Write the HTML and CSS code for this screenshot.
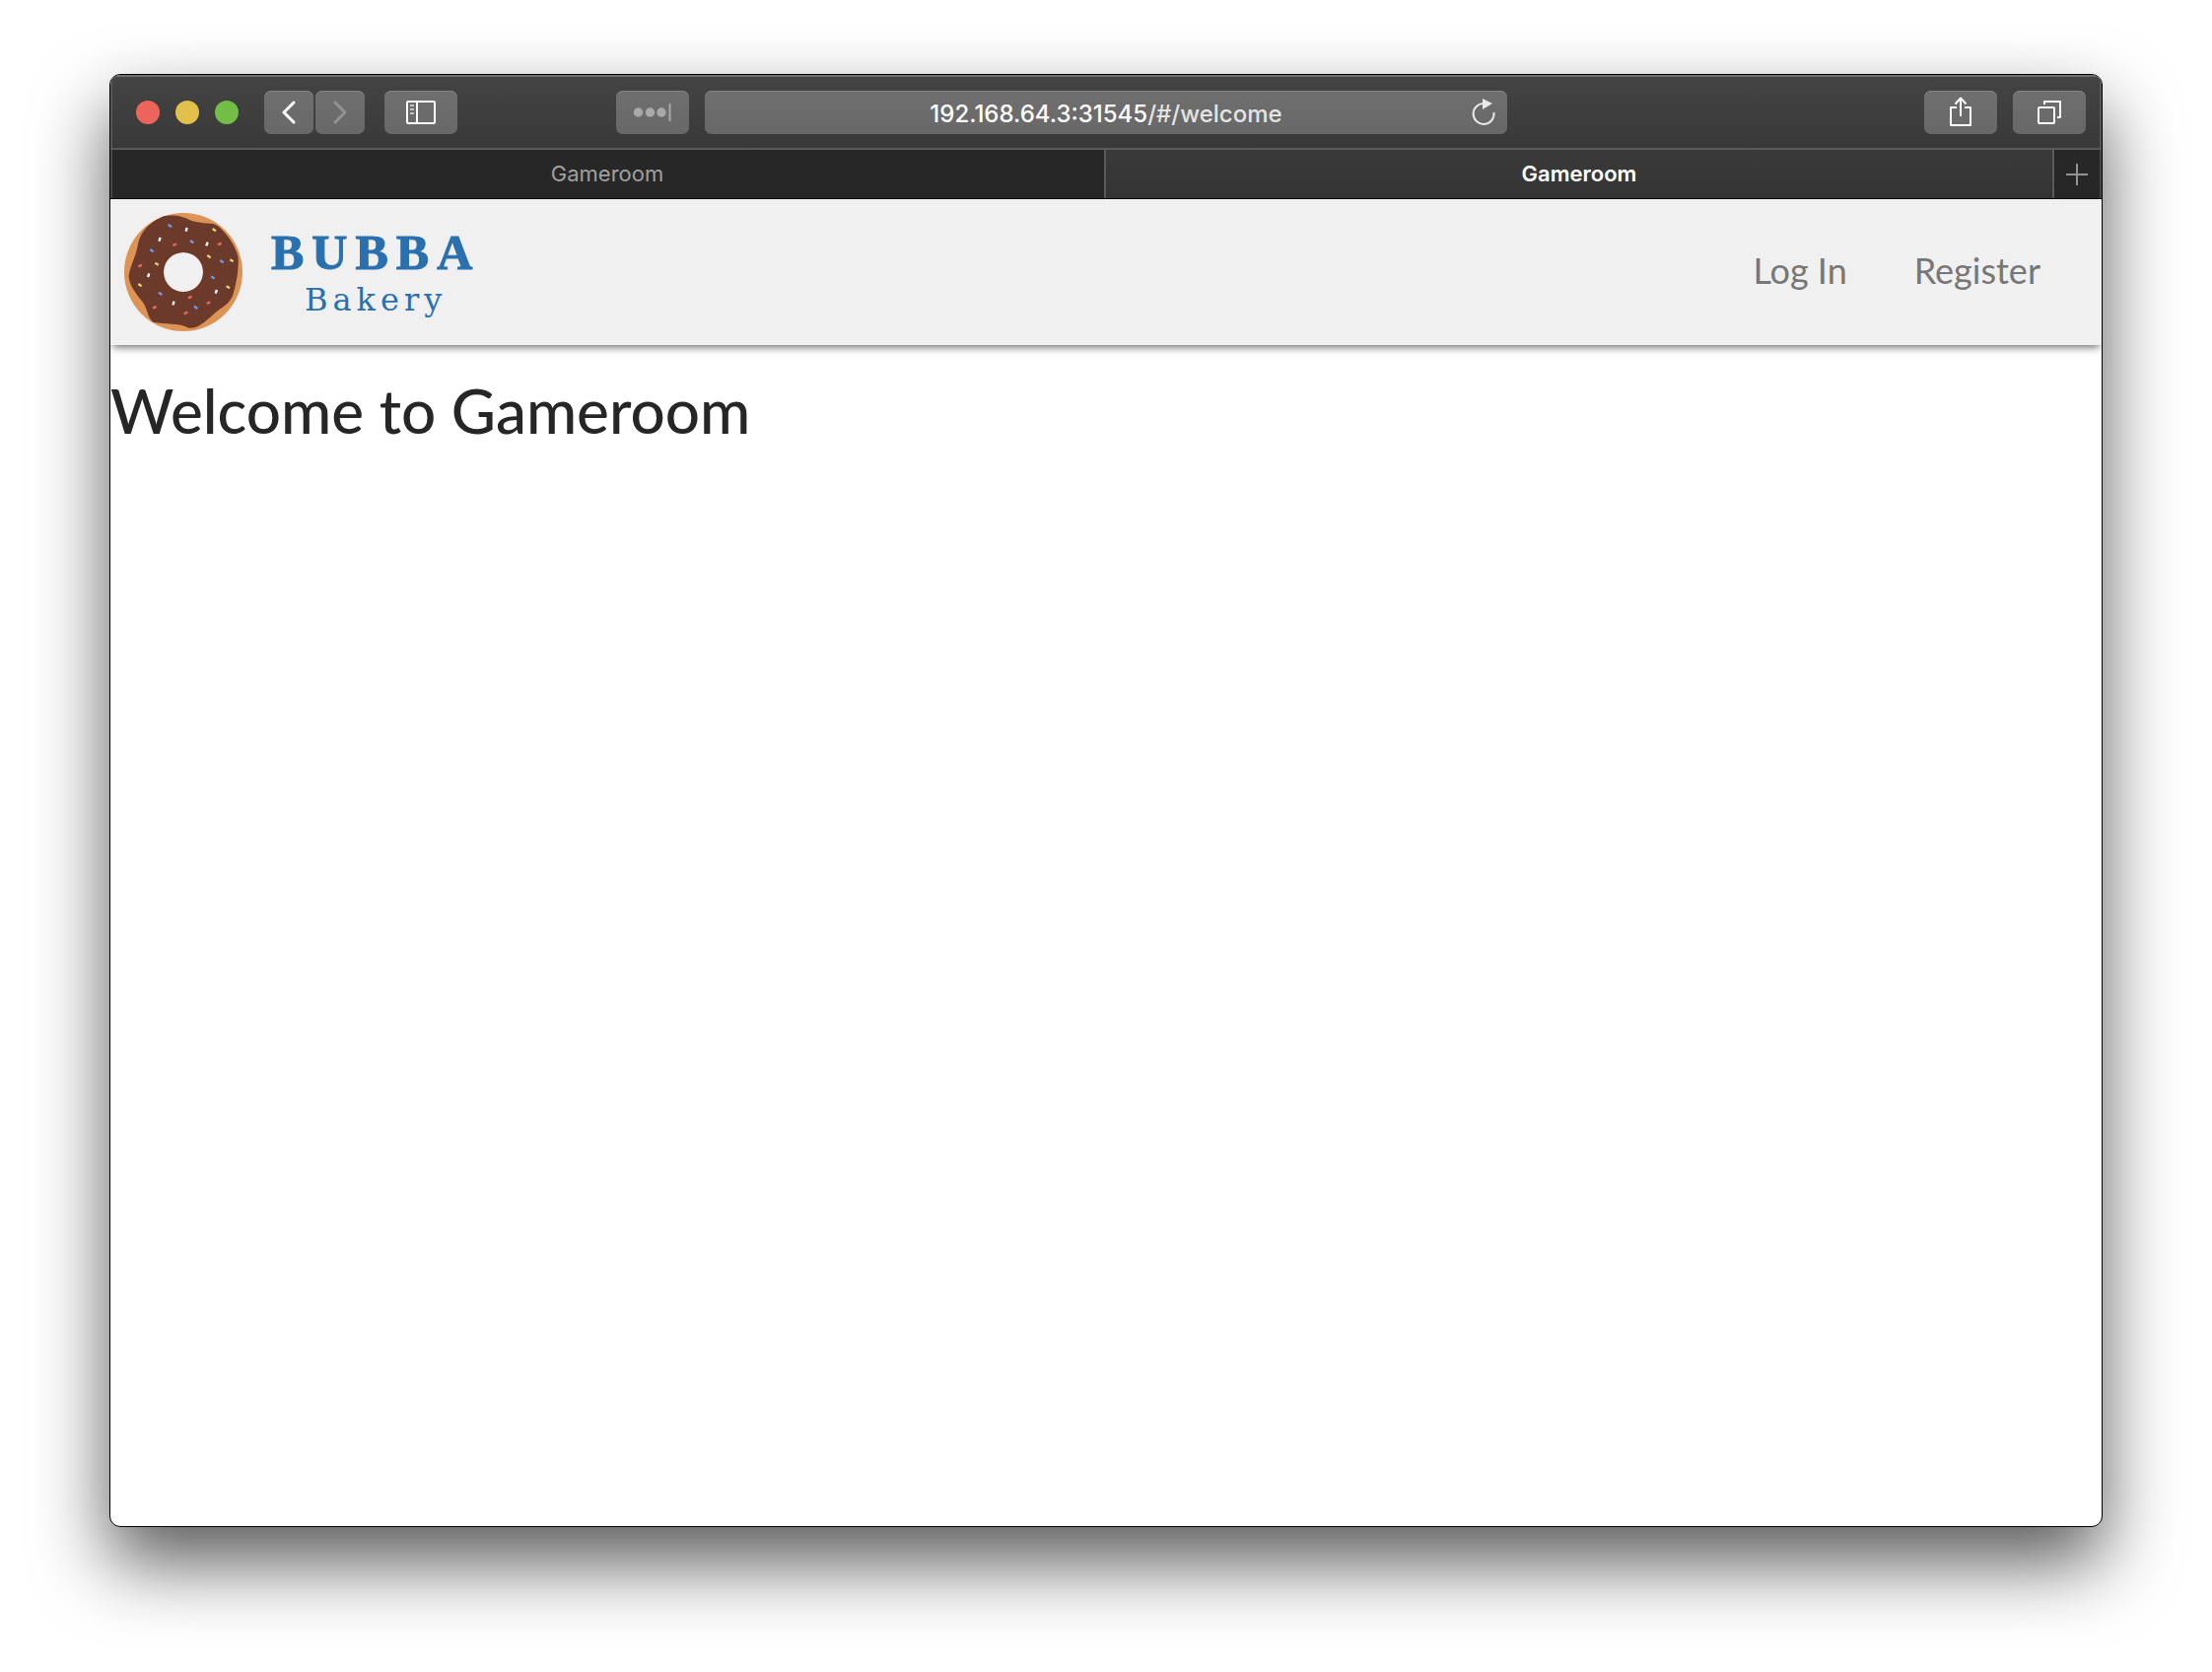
FILE: index.html
```
<!DOCTYPE html>
<html lang="en">
<head>
<meta charset="utf-8">
<meta name="viewport" content="width=device-width, initial-scale=1">
<title>Gameroom</title>
<link rel="stylesheet" href="styles.css">
</head>
<body>
<div class="window">
  <div class="toolbar">
    <div class="toolbar-side">
      <div class="lights">
        <button class="light light-close" aria-label="Close"></button>
        <button class="light light-minimize" aria-label="Minimize"></button>
        <button class="light light-zoom" aria-label="Zoom"></button>
      </div>
      <div class="history">
        <button class="tool tool-narrow" aria-label="Back">
          <svg width="50" height="44" viewBox="0 0 50 44"><path d="M30 12 20 22l10 10" fill="none" stroke="#fff" stroke-width="3" stroke-linecap="round" stroke-linejoin="round"/></svg>
        </button>
        <button class="tool tool-narrow" aria-label="Forward" disabled>
          <svg width="50" height="44" viewBox="0 0 50 44"><path d="M20 12 30 22 20 32" fill="none" stroke="#939393" stroke-width="3" stroke-linecap="round" stroke-linejoin="round"/></svg>
        </button>
      </div>
      <button class="tool" aria-label="Sidebar">
        <svg width="74" height="44" viewBox="0 0 74 44"><rect x="23" y="11" width="28" height="22" rx="1" fill="none" stroke="#fff" stroke-width="2"/><path d="M33 11v22" stroke="#fff" stroke-width="2"/><path d="M26 15h4M26 19h4M26 23h4" stroke="#c4c4c4" stroke-width="2"/></svg>
      </button>
      <button class="tool tool-end" aria-label="Fill password">
        <svg width="74" height="44" viewBox="0 0 74 44"><g fill="#a9a9a9"><circle cx="22.500" cy="22" r="4.700"/><circle cx="34.500" cy="22" r="4.700"/><circle cx="46" cy="22" r="4.700"/><rect x="53.500" y="13" width="2" height="18"/></g></svg>
      </button>
    </div>
    <div class="address">
      <span class="url">192.168.64.3:31545<span class="url-path">/#/welcome</span></span>
      <button class="reload" aria-label="Reload">
        <svg width="26" height="30" viewBox="0 0 26 30"><path d="M14 5a10.500 10.500 0 1 0 9.500 9" fill="none" stroke="#e8e8e8" stroke-width="2"/><path d="M12 0v11l10-6z" fill="#e8e8e8"/></svg>
      </button>
    </div>
    <div class="toolbar-side toolbar-right">
      <button class="tool" aria-label="Share">
        <svg width="74" height="44" viewBox="0 0 74 44"><g fill="none" stroke="#fff" stroke-width="2" stroke-linejoin="round"><path d="M33 17h-6v18h20V17h-6"/><path d="M37 26V8M31.500 13.500 37 7.500l5.500 6"/></g></svg>
      </button>
      <button class="tool" aria-label="Show all tabs">
        <svg width="74" height="44" viewBox="0 0 74 44"><g fill="none" stroke="#fff" stroke-width="2" stroke-linejoin="round"><rect x="26" y="17" width="16" height="16" rx="1"/><path d="M32 14v-3h16v16h-3"/></g></svg>
      </button>
    </div>
  </div>
  <div class="tabs">
    <button class="tab tab-first">Gameroom</button>
    <button class="tab tab-active">Gameroom</button>
    <button class="tab-add" aria-label="New tab">
      <svg width="22" height="22" viewBox="0 0 22 22"><path d="M11 0v22M0 11h22" stroke="#949494" stroke-width="2"/></svg>
    </button>
  </div>
  <div class="page">
    <header class="site-header">
      <a class="brand" href="#/welcome">
        <svg class="donut" viewBox="0 0 360 360" aria-hidden="true">
          <path fill="#dc9354" fill-rule="evenodd" d="M180 0a180 180 0 1 0 0 360a180 180 0 1 0 0-360zM180 120a60 60 0 1 1 0 120a60 60 0 1 1 0-120z"/>
          <path fill="#6b3a2a" fill-rule="evenodd" d="M120 10C148 5 166 7 188 16C222 34 244 29 274 34C302 45 341 102 347 137C349 180 339 222 330 252C318 281 291 289 261 318C238 337 222 352 197 350C166 333 126 340 88 332C70 318 72 291 55 269C37 247 13 217 14 191C20 154 37 132 43 89C54 50 83 26 120 10zM180 120a60 60 0 1 1 0 120a60 60 0 1 1 0-120z"/>
          <g stroke-width="7" fill="none">
            <path stroke="#fff" d="m188 56 3-11M106 86l4-11M250 100l4-11M72 195l4-11M148 280l4-11M278 245l4-11"/>
            <path stroke="#6d9eeb" d="m134 35 10 8M201 84l10 7M79 111l10 7M292 144l10 7M265 193l10 7M105 242l10 7M213 284l10 7"/>
            <path stroke="#e46a60" d="m148 99 11-5M285 97l11-5M43 163l11-5M195 259l11-5M251 276l11-5M87 290l11-5M182 307l11-5"/>
            <path stroke="#e7d36a" d="m269 48 10 7M253 129l10 7M322 142l10 6M94 152l10 6M43 216l10 7M311 223l10 6"/>
          </g>
        </svg>
        <span class="brand-text">
          <span class="brand-name">BUBBA</span>
          <span class="brand-kind">Bakery</span>
        </span>
      </a>
      <nav class="site-nav">
        <a href="#/login">Log In</a>
        <a href="#/register">Register</a>
      </nav>
    </header>
    <main>
      <h1>Welcome to Gameroom</h1>
    </main>
  </div>
</div>
</body>
</html>
```
FILE: styles.css
```
* {
  box-sizing: border-box;
}

body {
  margin: 0;
  min-height: 100vh;
  padding: 75px 111px 147px;
  display: flex;
  background: #fff;
  font-family: Inter, "Liberation Sans", sans-serif;
}

button {
  margin: 0;
  padding: 0;
  border: 0;
  font: inherit;
  color: inherit;
  background: none;
}

svg {
  display: block;
}

.window {
  flex: 1;
  min-width: 0;
  display: flex;
  flex-direction: column;
  overflow: hidden;
  border: 1px solid #000;
  border-radius: 11px;
  background: #fff;
  box-shadow: 0 36px 76px rgba(0, 0, 0, 0.65);
}

.toolbar {
  display: grid;
  grid-template-columns: 1fr minmax(0, 814px) 1fr;
  align-items: center;
  column-gap: 16px;
  height: 76px;
  padding: 2px 16px 0;
  border-bottom: 2px solid #5a5a5a;
  background: linear-gradient(#444, #393939);
  box-shadow: inset 0 2px #6f6f6f, inset 2px 0 #575757, inset -2px 0 #575757;
}

.toolbar-side {
  display: flex;
  align-items: center;
}

.toolbar-right {
  justify-content: flex-end;
  gap: 16px;
}

.lights {
  display: flex;
  gap: 16px;
  margin: 0 26px 0 10px;
}

.light {
  width: 24px;
  height: 24px;
  border-radius: 50%;
}

.light-close {
  background: #ed655a;
}

.light-minimize {
  background: #e1c04c;
}

.light-zoom {
  background: #72be47;
}

.history {
  display: flex;
  gap: 2px;
  margin-right: 20px;
}

.tool,
.address {
  height: 44px;
  border-radius: 7px;
  background: linear-gradient(#6f6f6f, #686868);
  box-shadow: inset 0 1px #858585;
}

.tool {
  width: 74px;
}

.tool-narrow {
  width: 50px;
}

.tool-end {
  margin-left: auto;
}

.address {
  display: grid;
  grid-template-columns: 1fr auto 1fr;
  align-items: center;
  padding: 0 11px;
}

.url {
  grid-column: 2;
  padding-top: 2px;
  color: #fff;
  font-size: 24px;
  font-weight: 500;
  line-height: 44px;
}

.url-path {
  color: #e4e4e4;
}

.reload {
  justify-self: end;
}

.tabs {
  display: flex;
  height: 50px;
  border-bottom: 1px solid #000;
  background: #272727;
  box-shadow: inset 2px 0 #484848, inset -2px 0 #484848;
}

.tab {
  flex: 1;
  padding-bottom: 2px;
  border-right: 2px solid #5a5a5a;
  color: #a0a0a0;
  font-size: 22px;
  line-height: 46px;
}

.tab-first {
  flex: 0 0 50%;
}

.tab-active {
  background: linear-gradient(#3a3a3a, #343434);
  color: #fff;
  font-weight: 600;
}

.tab-add {
  display: grid;
  place-items: center;
  width: 48px;
  padding-right: 2px;
}

.page {
  flex: 1;
  color: #212529;
  font-family: Lato, "Open Sans", sans-serif;
}

.site-header {
  display: flex;
  align-items: center;
  justify-content: space-between;
  padding: 14px 62px 14px 14px;
  background: #f0f0f0;
  box-shadow: 0 4px 8px -2px rgba(0, 0, 0, 0.6);
}

.brand {
  display: flex;
  align-items: center;
  gap: 29px;
  color: #2a70ae;
  text-decoration: none;
}

.donut {
  width: 120px;
  height: 120px;
}

.brand-text {
  display: flex;
  flex-direction: column;
  align-items: center;
  padding-top: 6px;
}

.brand-name {
  font: bold 50px/50px "Liberation Serif", serif;
  letter-spacing: 8px;
  -webkit-text-stroke: 1px currentColor;
}

.brand-kind {
  font: 32px/46px "DejaVu Serif", serif;
  letter-spacing: 5px;
}

.site-nav {
  display: flex;
  gap: 68px;
}

.site-nav a {
  padding-bottom: 4px;
  color: #777;
  font-size: 36px;
  line-height: 48px;
  text-decoration: none;
}

h1 {
  margin: 0;
  padding: 30px 0;
  color: #262626;
  font-size: 62px;
  font-weight: 500;
  line-height: 72px;
}
```
